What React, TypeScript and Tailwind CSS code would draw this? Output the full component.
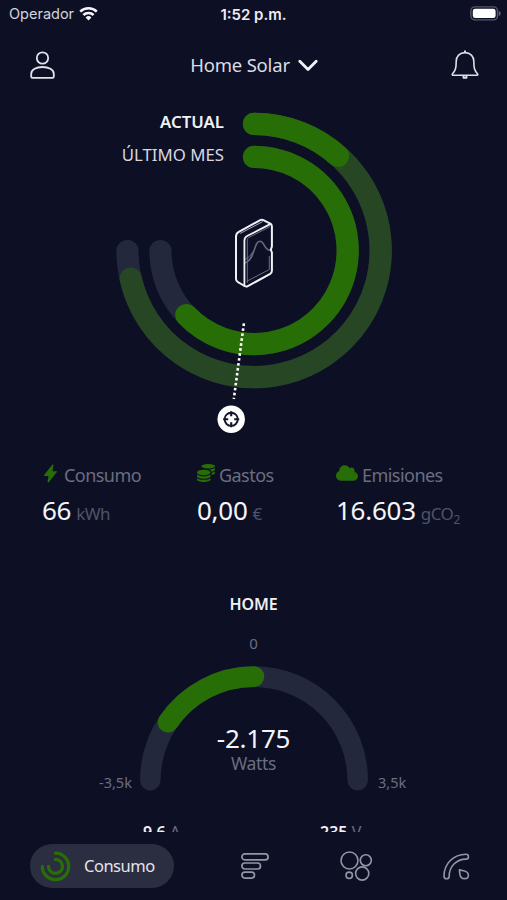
import type { ReactNode } from "react";
import { FaCloud, FaCoins } from "react-icons/fa";
import { IoFlash } from "react-icons/io5";

const GREEN = "#286e06";
const DIM_GREEN = "#264624";
const TRACK = "#24283c";

function StatusBar() {
  return (
    <div className="grid h-7 grid-cols-3 items-center pl-[9px] pr-[6px] font-['Inter',sans-serif] text-[14px] leading-none text-[#d3d4dd]">
      <div className="flex items-center gap-[5px]">
        <span className="text-[14.5px]">Operador</span>
        <svg className="-mt-[2px]" width="19" height="15" viewBox="0 0 19 15" fill="none" stroke="#f4f4f8" strokeWidth="2.5">
          <path d="M1.2 5.6a11.8 11.8 0 0 1 16.6 0" />
          <path d="M4.4 9a7.2 7.2 0 0 1 10.2 0" />
          <path d="M6.6 11.4a4.1 4.1 0 0 1 5.8 0L9.5 14.4z" fill="#f4f4f8" stroke="none" />
        </svg>
      </div>
      <span className="-ml-[3px] whitespace-nowrap text-center text-[15px] font-semibold text-[#ececf2]">1:52 p.m.</span>
      <svg className="-mt-[2px] justify-self-end" width="31" height="15" viewBox="0 0 31 15" fill="none">
        <rect x="0.9" y="0.9" width="26.6" height="13" rx="4" stroke="#55566a" strokeWidth="1.4" />
        <rect x="2.8" y="2.7" width="22.8" height="9.4" rx="2.4" fill="#fff" />
        <path d="M28.8 5v5c1.3-.6 1.8-1.4 1.8-2.5S30.1 5.6 28.8 5z" fill="#66677a" />
      </svg>
    </div>
  );
}

function Header() {
  return (
    <header className="flex h-[74px] items-center justify-between pl-[30px] pr-[28px]">
      <svg width="25" height="28" viewBox="0 0 25 28" fill="none" stroke="#e2e2ea" strokeWidth="1.8" strokeLinejoin="round">
        <circle cx="12.5" cy="7" r="5.7" />
        <path d="M2.5 26.8h20c.8 0 1.3-.5 1.3-1.3v-2.6c0-4.3-5.2-6.9-11.3-6.9S1.2 18.6 1.2 22.9v2.6c0 .8.5 1.3 1.3 1.3z" />
      </svg>
      <div className="flex items-center gap-2 pl-[2px]">
        <span className="text-[18.5px] leading-none tracking-[-0.01em] text-[#dcdce4]">Home Solar</span>
        <svg width="20" height="13" viewBox="0 0 20 13" fill="none" stroke="#f2f2f6" strokeWidth="2.8" strokeLinecap="round" strokeLinejoin="round">
          <path d="M1.8 2.2 10 10.4l8.2-8.2" />
        </svg>
      </div>
      <svg width="28" height="30" viewBox="0 0 28 30" fill="none" stroke="#dedfe7" strokeWidth="1.6" strokeLinejoin="round">
        <path d="M14 2.6c-5.4 0-8.8 3.9-8.8 8.7 0 6.9-.8 9.4-3.8 12.7-.4.5-.2 1.3.5 1.3h24.200c.7 0 .9-.8.500-1.300-3-3.300-3.800-5.800-3.800-12.700 0-4.800-3.400-8.700-8.800-8.700z" />
        <path d="M14 .5v2.3M12.5 25.5v2.2h3v-2.2" strokeWidth="1.9" />
      </svg>
    </header>
  );
}

function Dial() {
  return (
    <section className="relative h-[338px]">
      <svg className="block" width="507" height="338" viewBox="0 102 507 338" fill="none" strokeLinecap="round">
        <g strokeWidth="22.2">
          <path d="M254 123.9A126.6 126.6 0 1 1 127.4 251" stroke={TRACK} />
          <path d="M254 123.9A126.6 126.6 0 1 1 130.7 278.5" stroke={DIM_GREEN} />
          <path d="M254 123.9A126.6 126.6 0 0 1 338 156" stroke={GREEN} />
          <path d="M254 156.9A93.6 93.6 0 1 1 160.4 251" stroke={TRACK} />
          <path d="M254 156.9A93.6 93.6 0 1 1 186.3 315" stroke={GREEN} />
        </g>

        {/* battery unit */}
        <g strokeLinejoin="round">
          <path d="M247.3 282.5v-42.5c0-1.3.5-2 1.5-2.5l20.8-10.7M247.3 281l22-11.5v-13" stroke="#77798b" strokeWidth="0.9" />
          <path d="M245.5 262.7c9.500-3.500 8.500-21.400 14.200-21.400 5 0 4.300 9.200 10.800 8.900" stroke="#66687b" strokeWidth="1.6" />
          <path d="M245.500 259c3.500-1.500 5.500-4 7-7" stroke="#66687b" strokeWidth="1" />
          <path d="M240.500 233.300 262.300 221.800" stroke="#b9bac6" strokeWidth="0.9" />
          <path d="M236 279v-42.3c0-2.4.8-3.900 2.800-4.900l21.400-11.600c1.100-.6 2.200-.6 3.200-.1l6.900 3.500c1.200.6 1.600 1.500 1.600 2.800v20.300l-1.100 2.900 1.100 2.900v18.300c0 1.400-.5 2.300-1.700 3l-22.400 12.400c-1.100.6-2.200.5-3.200-.2l-6.600-3.800c-1.300-.8-2-1.800-2-3.200z" stroke="#f1f1f6" strokeWidth="2" />
          <path d="M244.4 286v-45.200c0-2.400.7-3.800 2.700-4.800l23.600-12.100" stroke="#f1f1f6" strokeWidth="1.8" />
        </g>

        <path d="M243.9 323.4 233.8 399" stroke="#fff" strokeWidth="2.6" strokeDasharray="2.6 2.4" strokeLinecap="butt" />
        <circle cx="231.2" cy="419.3" r="13.7" fill="#fff" />
        <circle cx="231.2" cy="419.3" r="6.600" stroke="#15172b" strokeWidth="1.9" />
        <path d="M231.2 411.3v5M231.2 422.3v5M223.2 419.3h5M234.2 419.3h5" stroke="#15172b" strokeWidth="2.1" strokeLinecap="butt" />
      </svg>
      <div className="absolute left-0 top-[3px] w-[224px] text-right text-[16.8px] leading-[33px]">
        <p className="font-semibold text-[#f0f0f5]">ACTUAL</p>
        <p className="text-[#d8d8e1]">ÚLTIMO MES</p>
      </div>
    </section>
  );
}

type StatProps = {
  icon: ReactNode;
  label: string;
  value: string;
  unit: ReactNode;
  className: string;
};

function Stat({ icon, label, value, unit, className }: StatProps) {
  return (
    <div className={className}>
      <div className="flex h-[26px] items-center text-[18px] leading-none tracking-[-0.03em] text-[#6b6d80]">
        {icon}
        <span>{label}</span>
      </div>
      <p className="mt-[5px] flex h-[34px] items-baseline gap-[5px] whitespace-nowrap leading-[34px]">
        <span className="text-[26px] tracking-[-0.01em] text-[#f5f5f8]">{value}</span>
        <span className="text-[17px] tracking-[-0.03em] text-[#50526a]">{unit}</span>
      </p>
    </div>
  );
}

function Stats() {
  return (
    <section className="flex h-[140px] pl-[42px] pt-[22px]">
      <Stat
        className="w-[155px]"
        icon={<IoFlash size={19} color={GREEN} className="-ml-px -mt-1 mr-[4px]" />}
        label="Consumo"
        value="66"
        unit="kWh"
      />
      <Stat
        className="w-[139px]"
        icon={<FaCoins size={18} color={GREEN} className="-mt-1 mr-1" />}
        label="Gastos"
        value="0,00"
        unit="€"
      />
      <Stat
        className="flex-1"
        icon={<FaCloud size={22} color={GREEN} className="-mt-1 mr-1" />}
        label="Emisiones"
        value="16.603"
        unit={
          <>
            gCO<span className="relative top-[4px] text-[12px]">2</span>
          </>
        }
      />
    </section>
  );
}

function Gauge() {
  return (
    <section className="flex h-[252px] flex-col items-center overflow-hidden pt-[12px]">
      <h2 className="text-[16px] font-semibold leading-6 tracking-[-0.01em] text-[#f0f0f5]">HOME</h2>
      <p className="mt-[17px] text-[15px] leading-5 text-[#6b6d80]">0</p>
      <div className="relative mt-[7px] h-[140px] w-full shrink-0">
        <svg className="block" width="507" height="140" viewBox="0 660 507 140" fill="none" strokeWidth="20.6" strokeLinecap="round">
          <path d="M150.3 780.3a103.7 103.7 0 0 1 207.4 0" stroke={TRACK} />
          <path d="M168 722.3A103.7 103.7 0 0 1 254 676.6" stroke={GREEN} />
        </svg>
        <div className="absolute inset-x-0 top-[61px] text-center">
          <p className="text-[26px] leading-[34px] tracking-[-0.01em] text-[#f5f5f8]">-2.175</p>
          <p className="text-[17.5px] leading-4 tracking-[-0.02em] text-[#6b6d80]">Watts</p>
        </div>
        <span className="absolute left-[99px] top-[112px] text-[14.5px] leading-5 text-[#6b6d80]">-3,5k</span>
        <span className="absolute left-[378px] top-[112px] text-[14.5px] leading-5 text-[#6b6d80]">3,5k</span>
      </div>
      <div className="mt-[20px] flex w-full shrink-0 text-[16px] leading-6 text-[#6b6d80]">
        <p className="w-[177px] whitespace-nowrap pl-[143px]">
          <b className="font-semibold text-[#f0f0f5]">9,6</b> A
        </p>
        <p className="whitespace-nowrap pl-[143px]">
          <b className="font-semibold text-[#f0f0f5]">235</b> V
        </p>
      </div>
    </section>
  );
}

function TabBar() {
  return (
    <nav className="flex h-[68px] items-center pl-[30px]">
      <div className="flex h-[44px] w-[144px] items-center gap-[13px] rounded-full bg-[#2b2d40] pl-[10px]">
        <svg width="31" height="31" viewBox="0 0 31 31" fill="none" stroke={GREEN} strokeWidth="3.3" strokeLinecap="round">
          <path d="M15.5 2.2A13.2 13.2 0 1 1 2.3 15.4" />
          <path d="M15.5 8.4A7 7 0 1 1 8.5 15.4" />
        </svg>
        <span className="text-[16.5px] leading-none tracking-[-0.03em] text-[#e4e4ec]">Consumo</span>
      </div>
      <svg className="ml-[67px]" width="28" height="28" viewBox="0 0 28 28" fill="none" stroke="#9495a5" strokeWidth="1.7">
        <rect x="0.9" y="1.9" width="26.2" height="6" rx="3" />
        <rect x="0.9" y="11" width="18.6" height="6" rx="3" />
        <rect x="0.9" y="20.1" width="12.6" height="6" rx="3" />
      </svg>
      <svg className="ml-[71px]" width="33" height="30" viewBox="0 0 33 30" fill="none" stroke="#9495a5" strokeWidth="1.6">
        <circle cx="9.5" cy="9.5" r="8.5" />
        <circle cx="25.8" cy="9.2" r="5.5" />
        <circle cx="9.2" cy="24.3" r="3.2" />
        <circle cx="22.2" cy="22.5" r="6.6" />
      </svg>
      <svg className="ml-[70px]" width="27" height="27" viewBox="0 0 27 27" fill="none" stroke="#9495a5" strokeWidth="1.6" strokeLinejoin="round">
        <path d="M1 23.200C1 10.600 10.500 1.200 23 1.200a2.400 2.400 0 0 1 0 4.900C13.300 6.100 6.200 13.500 6.200 23.200a2.600 2.600 0 0 1-5.200 0z" />
        <path d="M16.400 16.900l4 .8c3 .6 5 2.200 5 4.500 0 2.100-1.600 3.400-3.800 3.400-2.600 0-4.300-1.500-4.700-4.300z" />
      </svg>
    </nav>
  );
}

export default function App() {
  return (
    <div className="flex h-[900px] w-[507px] flex-col overflow-hidden bg-[#0d1025] font-['Noto_Sans',sans-serif]">
      <StatusBar />
      <Header />
      <Dial />
      <Stats />
      <Gauge />
      <TabBar />
    </div>
  );
}
